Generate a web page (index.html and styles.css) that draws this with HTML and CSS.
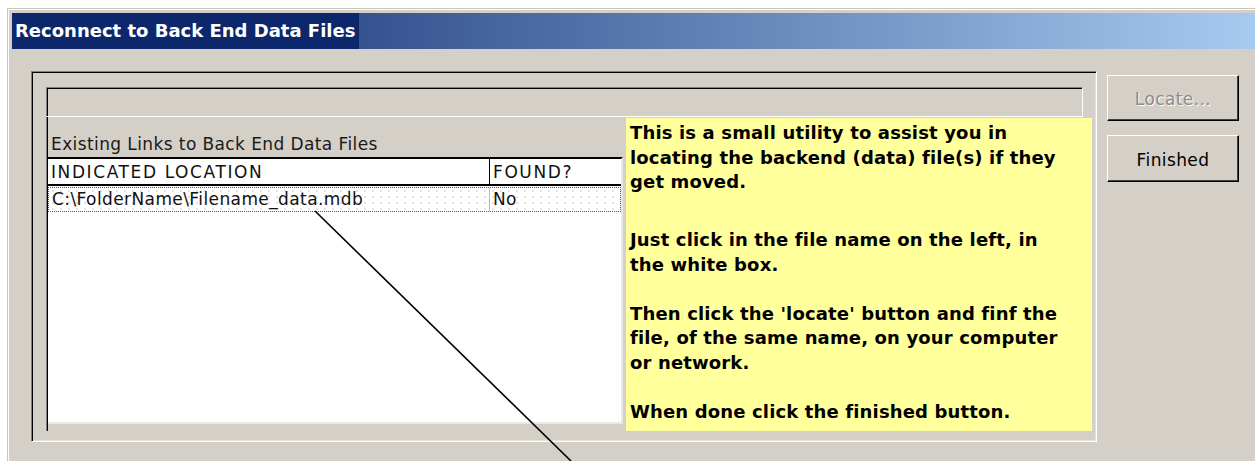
FILE: index.html
```html
<!DOCTYPE html>
<html lang="en">
<head>
<meta charset="utf-8">
<title>Reconnect to Back End Data Files</title>
<link rel="stylesheet" href="styles.css">
</head>
<body>
<div class="window">
  <div class="titlebar"><span class="caption">Reconnect to Back End Data Files</span></div>
  <div class="client">
    <div class="group">
      <div class="status-box"></div>
      <div class="lower">
        <div class="links">
          <div class="links-label">Existing Links to Back End Data Files</div>
          <div class="listbox">
            <div class="list-row list-head">
              <span class="col-loc">INDICATED LOCATION</span>
              <span class="col-found">FOUND?</span>
            </div>
            <div class="list-row list-item">
              <span class="col-loc">C:\FolderName\Filename_data.mdb</span>
              <span class="col-found">No</span>
            </div>
          </div>
        </div>
        <div class="note">
          <p class="first">This is a small utility to assist you in<br>locating the backend (data) file(s) if they<br>get moved.</p>
          <p>Just click in the file name on the left, in<br>the white box.</p>
          <p>Then click the 'locate' button and finf the<br>file, of the same name, on your computer<br>or network.</p>
          <p>When done click the finished button.</p>
        </div>
      </div>
    </div>
    <div class="buttons">
      <button class="btn btn-locate" disabled>Locate...</button>
      <button class="btn btn-finished">Finished</button>
    </div>
  </div>
</div>
<svg class="pointer-line" width="1255" height="461" viewBox="0 0 1255 461">
  <line x1="315" y1="211" x2="571" y2="461"/>
</svg>
</body>
</html>
```
FILE: styles.css
```css
html, body {
  margin: 0;
  padding: 0;
  background: #ffffff;
  width: 1255px;
  height: 461px;
  overflow: hidden;
}

body {
  position: relative;
  font-family: "DejaVu Sans", "Liberation Sans", sans-serif;
}

/* dialog frame */
.window {
  margin: 8px 0 0 7px;
  height: 453px;
  background: #d4d0c8;
  border-top: 1px solid #c9c5bd;
  border-left: 1px solid #c9c5bd;
  box-shadow: inset 1px 1px 0 #ffffff;
  box-sizing: border-box;
}

.titlebar {
  margin: 4px 0 0 4px;
  height: 36px;
  background: linear-gradient(to right, #0a246a 0%, #a6caf0 100%);
  display: flex;
}

.caption {
  background: #0c276c;
  color: #ffffff;
  font-weight: bold;
  font-size: 18px;
  line-height: 36px;
  padding: 0 4px 0 3px;
  white-space: nowrap;
}

.client {
  display: flex;
  align-items: flex-start;
  padding: 22px 0 0 23px;
}

/* sunken group frame */
.group {
  width: 1066px;
  height: 371px;
  box-sizing: border-box;
  border: 1px solid;
  border-color: #808080 #ffffff #ffffff #808080;
  box-shadow: inset 1px 1px 0 #000000, inset -1px -1px 0 #e4e1da;
  padding: 15px 13px 0 14px;
}

.status-box {
  height: 30px;
  box-sizing: border-box;
  border: 1px solid;
  border-color: #808080 #ffffff #ffffff #808080;
  box-shadow: inset 1px 1px 0 #000000;
  background: #d4d0c8;
}

.lower {
  display: grid;
  grid-template-columns: 580px 1fr;
  margin-right: -9px;
}

.links {
  display: flex;
  flex-direction: column;
  border-left: 1px solid #808080;
  box-shadow: inset 1px 0 0 #000000;
  padding-right: 3px;
}

.links-label {
  height: 40px;
  box-sizing: border-box;
  padding: 17px 0 0 4px;
  font-size: 17px;
  letter-spacing: 0.4px;
  line-height: 20px;
  color: #1a1a1a;
  white-space: nowrap;
}

.listbox {
  height: 267px;
  box-sizing: border-box;
  margin-left: 1px;
  background: #ffffff;
  border-top: 2px solid #000000;
  border-right: 2px solid #ece9e2;
  border-bottom: 2px solid #ece9e2;
}

.list-row {
  display: flex;
  font-size: 17px;
  letter-spacing: 0.4px;
  color: #111111;
  white-space: nowrap;
}

.list-head {
  height: 27px;
  line-height: 27px;
  border-bottom: 2px solid #000000;
  box-sizing: border-box;
  letter-spacing: 1.6px;
}

.list-item {
  height: 25px;
  line-height: 23px;
  box-sizing: border-box;
  border: 1px dotted #555555;
  margin-top: 1px;
  background-color: #ffffff;
  background-image: radial-gradient(circle, #e2e2e2 0.9px, transparent 1.3px);
  background-size: 8px 6px;
}

.col-loc {
  width: 438px;
  padding-left: 3px;
  border-right: 1px solid #000000;
}

.list-item .col-loc {
  border-right-color: #b8b8b8;
  width: 437px;
}

.col-found {
  padding-left: 3px;
}

/* yellow help note */
.note {
  height: 313px;
  margin-top: 1px;
  background: #ffff9c;
  padding: 3px 0 0 4px;
  box-sizing: border-box;
  font-weight: bold;
  font-size: 18px;
  letter-spacing: 0.15px;
  line-height: 24.5px;
  color: #000000;
  white-space: nowrap;
  position: relative;
  z-index: 1;
}

.note p {
  margin: 0 0 24.5px 0;
}

.note p.first {
  margin-bottom: 33.5px;
}

/* command buttons */
.buttons {
  display: flex;
  flex-direction: column;
  gap: 14px;
  margin: 4px 0 0 10px;
}

.btn {
  width: 132px;
  height: 46px;
  box-sizing: border-box;
  background: #d4d0c8;
  border: 1px solid;
  border-color: #ffffff #000000 #000000 #ffffff;
  box-shadow: inset -1px -1px 0 #404040;
  font-family: "DejaVu Sans", "Liberation Sans", sans-serif;
  font-size: 17px;
  letter-spacing: 0.4px;
  color: #000000;
  padding: 2px 0 0 0;
}

.btn-finished {
  height: 47px;
}

.btn-locate:disabled {
  color: #8a8a8a;
  text-shadow: 1px 1px 0 #ffffff;
}

/* annotation pointer drawn over the dialog */
.pointer-line {
  position: absolute;
  left: 0;
  top: 0;
  pointer-events: none;
  z-index: 5;
}

.pointer-line line {
  stroke: #000000;
  stroke-width: 1.6;
}
```
